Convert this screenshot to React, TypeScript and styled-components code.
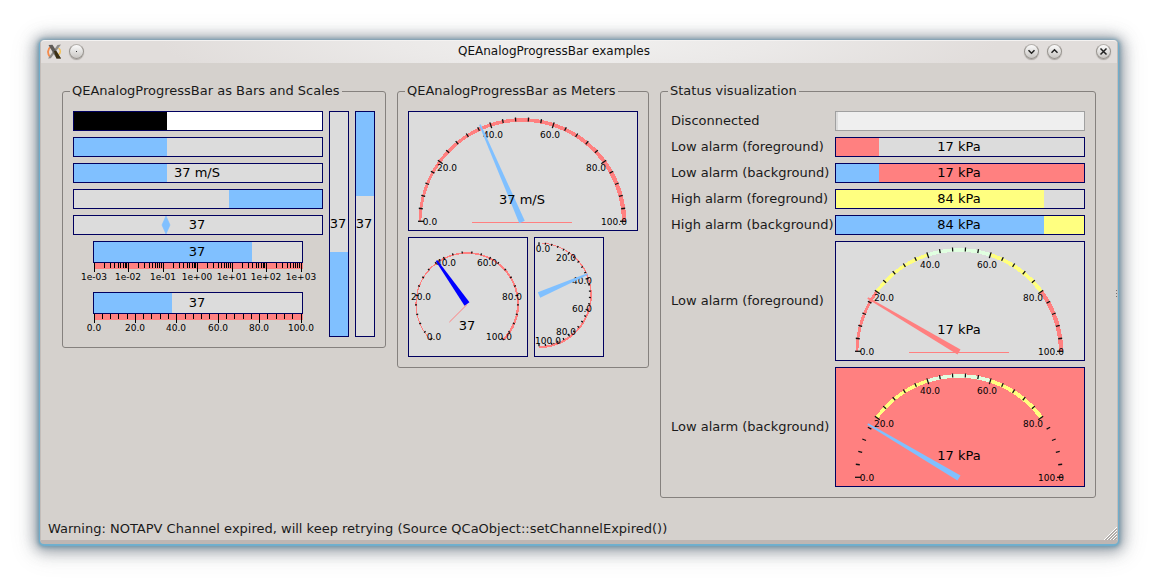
import React from "react";
import styled, { createGlobalStyle } from "styled-components";

const NAVY = "#00005f";
const BLUE = "#80c0ff";
const RED = "#ff8080";
const YELLOW = "#ffff80";
const MINT = "#e0ffe0";
const TROUGH = "#dcdcdc";

const GlobalStyle = createGlobalStyle`
  *, *::before, *::after { box-sizing: border-box; }
  body {
    margin: 0;
    background: #fff;
    color: #1a1a1a;
    font-family: "DejaVu Sans", Verdana, sans-serif;
    font-size: 13px;
    line-height: 17px;
  }
`;

/* ---------- window frame ---------- */

const Desktop = styled.div`
  display: flex;
  min-height: 100vh;
  padding: 40px;
`;

const Window = styled.main`
  position: relative;
  flex: 1;
  display: flex;
  flex-direction: column;
  background: #d5d1cd;
  border: 1px solid #c4bdb9;
  border-top: 0;
  border-bottom: 4px solid #beb6b3;
  border-radius: 4px;
  box-shadow:
    0 1px 1px 1px #6fb0cf,
    0 1px 4px 2px rgba(95, 140, 165, 0.8),
    0 2px 14px 5px rgba(80, 95, 110, 0.55),
    0 4px 24px 6px rgba(90, 90, 90, 0.18);
`;

const TitleBar = styled.header`
  display: flex;
  align-items: center;
  gap: 8px;
  height: 23px;
  padding: 0 6px 2px;
  border-radius: 4px 4px 0 0;
  border-top: 1px solid #f4f2f1;
  background: radial-gradient(ellipse 420px 60px at 50% 0, #f1f0ef 0%, #ebe9e8 45%, #e1dddb 100%);
`;

const Title = styled.h1`
  flex: 1;
  margin: 0;
  text-align: center;
  font-size: 12px;
  font-weight: 400;
  color: #111;
`;

const WindowButtons = styled.div<{ $gap: number }>`
  display: flex;
  gap: ${(p) => p.$gap}px;
`;

const RoundButton = styled.button`
  display: grid;
  place-items: center;
  width: 15px;
  height: 15px;
  padding: 0;
  border: 1px solid #98948f;
  border-top-color: #b5b1ad;
  border-radius: 50%;
  background: linear-gradient(#fbfbfb, #c9c6c3);
  box-shadow: 0 1px 1px #aaa5a1;
`;

const Content = styled.div`
  flex: 1;
  display: flex;
  align-items: flex-start;
  gap: 11px;
  padding: 20px 21px 10px;
`;

const StatusLine = styled.footer`
  padding: 0 7px 3px;
`;

const Grip = styled.svg`
  position: absolute;
  right: 0;
  bottom: 0;
`;

const EdgeHandle = styled.svg`
  position: absolute;
  right: -1px;
  top: 50%;
`;

/* ---------- groups ---------- */

const Group = styled.fieldset<{ $grow?: boolean }>`
  flex: ${(p) => (p.$grow ? "1 1 auto" : "0 0 auto")};
  min-width: 0;
  margin: 0;
  padding: 0;
  border: 1px solid #85817e;
  border-radius: 3px;
`;

const GroupTitle = styled.legend`
  margin-left: 7px;
  padding: 0 2px 2px;
  line-height: 15px;
`;

const GroupBody = styled.div`
  display: flex;
  gap: 6px;
  padding: 11px 10px 10px;
`;

const Stack = styled.div`
  display: flex;
  flex-direction: column;
  gap: 6px;
`;

const Row = styled.div`
  display: flex;
  gap: 6px;
`;

const StatusGrid = styled.div`
  display: grid;
  grid-template-columns: 158px 1fr;
  align-items: center;
  gap: 6px;
  padding: 11px 10px 10px;
`;

const StatusLabel = styled.span`
  padding-bottom: 2px;
  white-space: nowrap;
`;

/* ---------- bars ---------- */

const BarFrame = styled.div<{ $w?: string; $h: string; $bg: string; $edge: string }>`
  position: relative;
  display: flex;
  align-items: center;
  justify-content: center;
  width: ${(p) => p.$w ?? "auto"};
  height: ${(p) => p.$h};
  border: 1px solid ${(p) => p.$edge};
  background: ${(p) => p.$bg};
  color: #000;
`;

const BarFill = styled.div<{ $from: "left" | "right" | "top" | "bottom"; $color: string }>`
  position: absolute;
  background: ${(p) => p.$color};
  ${(p) =>
    p.$from === "left" || p.$from === "right" ? "top: 0; bottom: 0;" : "left: 0; right: 0;"}
  ${(p) => p.$from}: 0;
`;

const BarText = styled.span`
  position: relative;
  padding: 0 2px 2px 0;
  white-space: nowrap;
`;

const Marker = styled.svg`
  position: absolute;
  top: 0;
  transform: translateX(-50%);
`;

interface BarProps {
  label: string;
  percent: number;
  from?: "left" | "right" | "top" | "bottom";
  text?: string;
  fg?: string;
  bg?: string;
  edge?: string;
  width?: string;
  height?: string;
  marker?: boolean;
}

function Bar({
  label,
  percent,
  from = "left",
  text,
  fg = BLUE,
  bg = TROUGH,
  edge = NAVY,
  width,
  height = "20px",
  marker,
}: BarProps) {
  const size = `${percent}%`;
  const sideways = from === "left" || from === "right";
  return (
    <BarFrame
      role="meter"
      aria-label={label}
      aria-valuenow={Math.round(percent)}
      $w={width}
      $h={height}
      $bg={bg}
      $edge={edge}
    >
      {marker ? (
        <Marker width="10" height="18" viewBox="0 0 10 18" style={{ left: size }}>
          <path d="M5 0 L9 9 L5 18 L1 9Z" fill={fg} stroke={fg} strokeWidth="0.6" />
        </Marker>
      ) : (
        <BarFill $from={from} $color={fg} style={sideways ? { width: size } : { height: size }} />
      )}
      {text && <BarText>{text}</BarText>}
    </BarFrame>
  );
}

/* ---------- bar with a scale below ---------- */

const ScaleBox = styled.div`
  width: 250px;
  height: 45px;
`;

const ScaleBar = styled.div`
  padding: 0 20px;
`;

const Drawing = styled.svg`
  display: block;
  overflow: visible;
`;

const SmallText = styled.text`
  font-size: 9px;
  text-anchor: middle;
  fill: #000;
`;

const ReadoutText = styled.text`
  font-size: 13px;
  text-anchor: middle;
  fill: #000;
`;

interface Tick {
  at: number;
  text?: string;
}

const linearTicks: Tick[] = Array.from({ length: 26 }, (_, i) => ({
  at: i / 25,
  text: i % 5 === 0 ? (i * 4).toFixed(1) : undefined,
}));

const logTicks: Tick[] = [];
for (let d = -3; d <= 3; d++) {
  logTicks.push({ at: (d + 3) / 6, text: `1e${d < 0 ? "-" : "+"}0${Math.abs(d)}` });
  if (d < 3) {
    for (let k = 2; k < 10; k++) logTicks.push({ at: (d + 3 + Math.log10(k)) / 6 });
  }
}

function ScaledBar({ label, percent, ticks }: { label: string; percent: number; ticks: Tick[] }) {
  return (
    <ScaleBox>
      <ScaleBar>
        <Bar label={label} percent={percent} text="37" height="22px" />
      </ScaleBar>
      <Drawing width="250" height="23" viewBox="0 0 250 23">
        <rect x="21" y="0" width="209" height="6" fill={RED} />
        {ticks.map((t, i) => {
          const x = 21 + Math.floor(t.at * 207);
          return (
            <g key={i}>
              <rect x={x} y="0" width="1" height={t.text ? 9 : 5} fill="#000" />
              {t.text && (
                <SmallText x={x} y="17">
                  {t.text}
                </SmallText>
              )}
            </g>
          );
        })}
      </Drawing>
    </ScaleBox>
  );
}

/* ---------- round meters ---------- */

const MeterFrame = styled.div<{ $w?: string; $bg: string }>`
  width: ${(p) => p.$w ?? "auto"};
  height: 120px;
  border: 1px solid ${NAVY};
  background: ${(p) => p.$bg};
`;

interface Band {
  from: number;
  to: number;
  color: string;
}

interface MeterProps {
  label: string;
  value: number;
  text?: string;
  boxWidth: number;
  frameWidth?: string;
  cx: number;
  cy: number;
  radius: number;
  start: number;
  span: number;
  labelRadius: number;
  tick: [number, number, number];
  thickness: [number, number];
  needle: string;
  needleLength: number;
  bands?: Band[];
  bg?: string;
  spokes?: number[];
}

const allRed: Band[] = [{ from: 0, to: 100, color: RED }];
const alarmBands: Band[] = [
  { from: 0, to: 20, color: RED },
  { from: 20, to: 40, color: YELLOW },
  { from: 40, to: 60, color: MINT },
  { from: 60, to: 80, color: YELLOW },
  { from: 80, to: 100, color: RED },
];

function Meter(p: MeterProps) {
  const { cx, cy, radius, start, span, thickness, bands = allRed, bg = TROUGH, spokes = [] } = p;
  const point = (v: number, r: number, y0 = cy): [number, number] => {
    const a = ((start + (span * v) / 100) * Math.PI) / 180;
    return [cx + r * Math.cos(a), y0 + r * Math.sin(a)];
  };
  // The arc grows thicker from the low end to the high end.
  const half = (v: number) => (thickness[0] + ((thickness[1] - thickness[0]) * v) / 100) / 2;
  const bandPoints = (b: Band) => {
    const outer: string[] = [];
    const inner: string[] = [];
    for (let v = b.from; v <= b.to; v += 1) {
      outer.push(point(v, radius + half(v)).join(","));
      inner.unshift(point(v, radius - half(v)).join(","));
    }
    return [...outer, ...inner].join(" ");
  };
  const [tx, ty] = point(p.value, p.needleLength);
  const dx = (tx - cx) / p.needleLength;
  const dy = (ty - cy) / p.needleLength;
  const needlePoints = [
    [cx - dy * 3, cy + dx * 3],
    [tx - dy * 0.9, ty + dx * 0.9],
    [tx + dy * 0.9, ty - dx * 0.9],
    [cx + dy * 3, cy - dx * 3],
  ]
    .map((q) => q.join(","))
    .join(" ");
  return (
    <MeterFrame role="meter" aria-label={p.label} aria-valuenow={p.value} $w={p.frameWidth} $bg={bg}>
      <Drawing width="100%" height="118" viewBox={`1 1 ${p.boxWidth - 2} 118`}>
        {bands.map((b) => (
          <polygon key={b.from} points={bandPoints(b)} fill={b.color} shapeRendering="crispEdges" />
        ))}
        {spokes.map((v) => {
          const [x, y] = point(v, radius * 0.49, cy + 0.5);
          return (
            <line
              key={v}
              x1={cx}
              y1={cy + 0.5}
              x2={x}
              y2={y}
              stroke={RED}
              strokeWidth="1"
            />
          );
        })}
        {linearTicks.map((t) => {
          const v = t.at * 100;
          const [x1, y1] = point(v, radius + p.tick[0], cy - 0.7);
          const [x2, y2] = point(v, radius - (t.text ? p.tick[2] : p.tick[1]), cy - 0.7);
          return <line key={v} x1={x1} y1={y1} x2={x2} y2={y2} stroke="#111" strokeWidth="1.3" />;
        })}
        {linearTicks
          .filter((t) => t.text)
          .map((t) => {
            const [x, y] = point(t.at * 100, p.labelRadius);
            const minX = 2 + (t.text as string).length * 2.5;
            return (
              <SmallText key={t.at} x={Math.floor(Math.max(x, minX))} y={Math.round(y + 3)}>
                {t.text}
              </SmallText>
            );
          })}
        <polygon points={needlePoints} fill={p.needle} />
        {p.text && (
          <ReadoutText x={cx} y="93">
            {p.text}
          </ReadoutText>
        )}
      </Drawing>
    </MeterFrame>
  );
}

const halfDial = {
  cy: 111,
  radius: 102,
  start: 180,
  span: 180,
  labelRadius: 92,
  tick: [2, 2, 4] as [number, number, number],
  thickness: [2.8, 4.4] as [number, number],
  needleLength: 106,
};

/* ---------- icons ---------- */

function XLogo() {
  return (
    <svg width="15" height="15" viewBox="0 0 15 15" aria-hidden="true">
      <path d="M4 2.5 C0.5 5 0 9.5 3 13" fill="none" stroke="#f58a4a" strokeWidth="1.8" />
      <path d="M11.5 4 C14 6 14 9 11.5 10.5" fill="none" stroke="#f2c25a" strokeWidth="1.5" />
      <path d="M14 0.5 L10.5 1 L1 14.5 L3.8 14.2Z" fill="#8d8b88" />
      <path d="M1.5 1 L5.5 0.8 L14 14.5 L9.5 14.5Z" fill="#5f5c58" />
      <path d="M7 7 L9.3 7 L14 14.5 L9.5 14.5Z" fill="#3c3014" />
    </svg>
  );
}

const Glyph = ({ d }: { d: string }) => (
  <svg width="13" height="13" viewBox="0 0 13 13" aria-hidden="true">
    <path d={d} fill="none" stroke="#222" strokeWidth="1.5" />
  </svg>
);

export default function App() {
  return (
    <>
      <GlobalStyle />
      <Desktop>
        <Window>
          <TitleBar>
            <WindowButtons $gap={7}>
              <XLogo />
              <RoundButton type="button" aria-label="On all desktops">
                <svg width="13" height="13" viewBox="0 0 13 13" aria-hidden="true">
                  <rect x="6" y="6" width="1" height="1" fill="#333" />
                </svg>
              </RoundButton>
            </WindowButtons>
            <Title>QEAnalogProgressBar examples</Title>
            <WindowButtons $gap={34}>
              <WindowButtons $gap={8}>
                <RoundButton type="button" aria-label="Minimize">
                  <Glyph d="M3.5 5.2 L6.5 8.2 L9.5 5.2" />
                </RoundButton>
                <RoundButton type="button" aria-label="Maximize">
                  <Glyph d="M3.5 7.8 L6.5 4.8 L9.5 7.8" />
                </RoundButton>
              </WindowButtons>
              <RoundButton type="button" aria-label="Close">
                <Glyph d="M3.5 3.5 L9.5 9.5 M9.5 3.5 L3.5 9.5" />
              </RoundButton>
            </WindowButtons>
          </TitleBar>

          <Content>
            <Group>
              <GroupTitle>QEAnalogProgressBar as Bars and Scales</GroupTitle>
              <GroupBody>
                <Stack>
                  <Bar label="Plain" percent={37.4} fg="#000" bg="#fff" width="250px" />
                  <Bar label="Blue" percent={37.4} />
                  <Bar label="Speed" percent={37.4} text="37 m/S" />
                  <Bar label="Right to left" percent={37.4} from="right" />
                  <Bar label="Marker" percent={37} text="37" marker />
                  <ScaledBar label="Logarithmic" percent={76} ticks={logTicks} />
                  <ScaledBar label="Linear" percent={37.4} ticks={linearTicks} />
                </Stack>
                <Bar label="Upwards" percent={37.4} from="bottom" text="37" width="20px" height="226px" />
                <Bar label="Downwards" percent={37.4} from="top" text="37" width="20px" height="226px" />
              </GroupBody>
            </Group>

            <Group>
              <GroupTitle>QEAnalogProgressBar as Meters</GroupTitle>
              <GroupBody>
                <Stack>
                  <Meter
                    {...halfDial}
                    label="Speed meter"
                    value={37}
                    text="37 m/S"
                    boxWidth={230}
                    frameWidth="230px"
                    cx={114}
                    needle={BLUE}
                    spokes={[0, 100]}
                  />
                  <Row>
                    <Meter
                      label="Wide angle meter"
                      value={37}
                      text="37"
                      boxWidth={120}
                      frameWidth="120px"
                      cx={59}
                      cy={67}
                      radius={51}
                      start={135}
                      span={270}
                      labelRadius={46}
                      tick={[1, 1, 2]}
                      thickness={[0.8, 2.4]}
                      needle="#0000ff"
                      needleLength={53}
                      spokes={[0]}
                    />
                    <Meter
                      label="Sideways meter"
                      value={37}
                      boxWidth={70}
                      frameWidth="70px"
                      cx={5}
                      cy={58}
                      radius={52}
                      start={270}
                      span={180}
                      labelRadius={46}
                      tick={[0, 2, 3]}
                      thickness={[0.8, 2.4]}
                      needle={BLUE}
                      needleLength={53}
                    />
                  </Row>
                </Stack>
              </GroupBody>
            </Group>

            <Group $grow>
              <GroupTitle>Status visualization</GroupTitle>
              <StatusGrid>
                <StatusLabel>Disconnected</StatusLabel>
                <Bar label="Disconnected" percent={1} fg={TROUGH} bg="#efefef" edge="#a0a0a0" />
                <StatusLabel>Low alarm (foreground)</StatusLabel>
                <Bar label="Low alarm (foreground)" percent={17.4} fg={RED} text="17 kPa" />
                <StatusLabel>Low alarm (background)</StatusLabel>
                <Bar label="Low alarm (background)" percent={17.4} bg={RED} text="17 kPa" />
                <StatusLabel>High alarm (foreground)</StatusLabel>
                <Bar label="High alarm (foreground)" percent={84} fg={YELLOW} text="84 kPa" />
                <StatusLabel>High alarm (background)</StatusLabel>
                <Bar label="High alarm (background)" percent={84} bg={YELLOW} text="84 kPa" />
                <StatusLabel>Low alarm (foreground)</StatusLabel>
                <Meter
                  {...halfDial}
                  label="Low alarm meter (foreground)"
                  value={17}
                  text="17 kPa"
                  boxWidth={250}
                  cx={124}
                  needle={RED}
                  bands={alarmBands}
                  spokes={[0, 100]}
                />
                <StatusLabel>Low alarm (background)</StatusLabel>
                <Meter
                  {...halfDial}
                  label="Low alarm meter (background)"
                  value={17}
                  text="17 kPa"
                  boxWidth={250}
                  cx={124}
                  needle={BLUE}
                  bands={alarmBands}
                  bg={RED}
                />
              </StatusGrid>
            </Group>
          </Content>

          <StatusLine>
            Warning: NOTAPV Channel expired, will keep retrying (Source QCaObject::setChannelExpired())
          </StatusLine>

          <EdgeHandle width="3" height="8" viewBox="0 0 3 8" aria-hidden="true">
            <path d="M1 0h1v1h-1z M1 3h1v1h-1z M1 6h1v1h-1z" fill="#77726f" />
          </EdgeHandle>
          <Grip width="13" height="13" viewBox="0 0 13 13" aria-hidden="true">
            <path d="M0 13 L13 0 M3 13 L13 3 M6 13 L13 6 M9 13 L13 9" stroke="#fff" />
            <path d="M1.5 13 L13 1.5 M4.5 13 L13 4.5 M7.5 13 L13 7.5 M10.5 13 L13 10.5" stroke="#8d8884" />
          </Grip>
        </Window>
      </Desktop>
    </>
  );
}
